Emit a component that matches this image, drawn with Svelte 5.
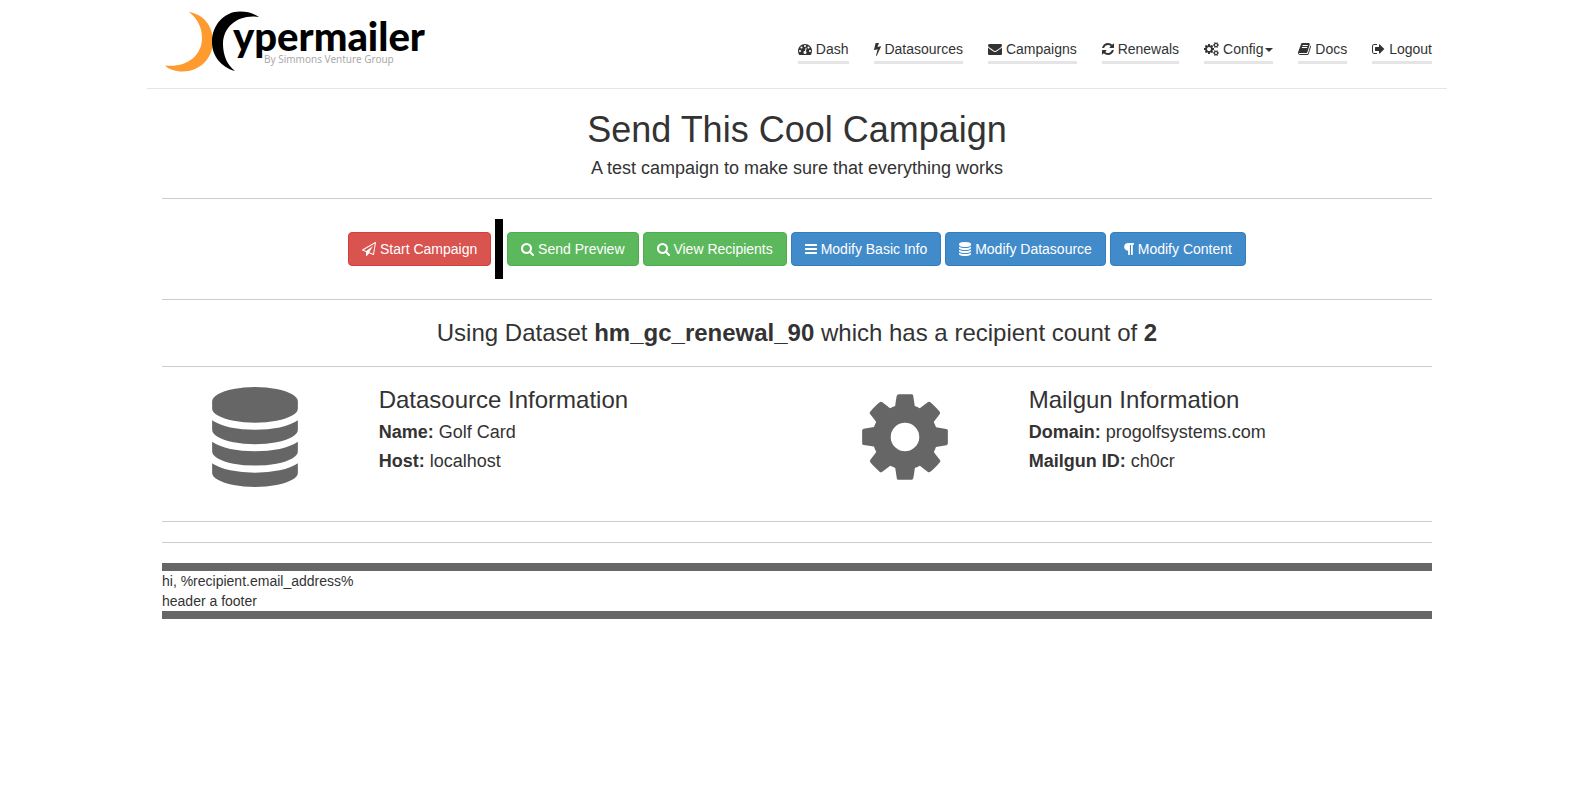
<script>
  const cog =
    'M1152 896q0-106-75-181t-181-75-181 75-75 181 75 181 181 75 181-75 75-181zm512-109v222q0 12-8 23t-20 13l-185 28q-19 54-39 91 35 50 107 138 10 12 10 25t-9 23q-27 37-99 108t-94 71q-12 0-26-9l-138-108q-44 23-91 38-16 136-29 186-7 28-36 28h-222q-14 0-24.5-8.5t-11.5-21.5l-28-184q-49-16-90-37l-141 107q-10 9-25 9-14 0-25-11-126-114-165-168-7-10-7-23 0-12 8-23 15-21 51-66.5t54-70.5q-27-50-41-99l-183-27q-13-2-21-12.5t-8-23.5v-222q0-12 8-23t19-13l186-28q14-46 39-92-40-57-107-138-10-12-10-24 0-10 9-23 26-36 98.5-107.5t94.5-71.5q13 0 26 10l138 107q44-23 91-38 16-136 29-186 7-28 36-28h222q14 0 24.5 8.5t11.5 21.5l28 184q49 16 90 37l142-107q9-9 24-9 13 0 25 10 129 119 165 170 7 8 7 22 0 12-8 23-15 21-51 66.5t-54 70.5q26 50 41 98l183 28q13 2 21 12.5t8 23.5z';
  const smallCog =
    'v140q0 16-149 31-12 27-30 52 51 113 51 138 0 4-4 7-122 71-124 71-8 0-46-47t-52-68q-20 2-30 2t-30-2q-14 21-52 68t-46 47q-2 0-124-71-4-3-4-7 0-25 51-138-18-25-30-52-149-15-149-31v-140q0-16 149-31 13-29 30-52-51-113-51-138 0-4 4-7 4-2 35-20t59-34 30-16q8 0 46 46.5t52 67.5q20-2 30-2t30 2q51-71 92-112l6-2q4 0 124 70 4 3 4 7 0 25-51 138 17 23 30 52 149 15 149 31z';
  const barShape = 'v128q0 26-19 45t-45 19h-1408q-26 0-45-19t-19-45v-128q0-26 19-45t45-19h1408q26 0 45 19t19 45z';

  // Each icon: left edge and width of its box in a 1792-unit em, then the outline.
  const icons = {
    dash: [0, 1792, 'M384 1152q0-53-37.5-90.5t-90.5-37.5-90.5 37.5-37.5 90.5 37.5 90.5 90.5 37.5 90.5-37.5 37.5-90.5zm192-448q0-53-37.5-90.5t-90.5-37.5-90.5 37.5-37.5 90.5 37.5 90.5 90.5 37.5 90.5-37.5 37.5-90.5zm428 481l101-382q6-26-7.5-48.5t-38.5-29.5-48 6.5-30 39.5l-101 382q-60 5-107 43.5t-63 98.5q-20 77 20 146t117 89 146-20 89-117q16-60-6-117t-72-91zm660-33q0-53-37.5-90.5t-90.5-37.5-90.5 37.5-37.5 90.5 37.5 90.5 90.5 37.5 90.5-37.5 37.5-90.5zm-640-640q0-53-37.5-90.5t-90.5-37.5-90.5 37.5-37.5 90.5 37.5 90.5 90.5 37.5 90.5-37.5 37.5-90.5zm448 192q0-53-37.5-90.5t-90.5-37.5-90.5 37.5-37.5 90.5 37.5 90.5 90.5 37.5 90.5-37.5 37.5-90.5zm320 448q0 261-141 483-19 29-54 29h-1402q-35 0-54-29-141-221-141-483 0-182 71-348t191-286 286-191 348-71 348 71 286 191 191 286 71 348z'],
    bolt: [448, 896, 'M1333 566q18 20 7 44l-540 1157q-13 25-42 25-4 0-14-2-17-5-25.5-19t-4.5-30l197-808-406 101q-4 1-12 1-18 0-31-11-18-15-13-39l201-825q4-14 16-23t28-9h328q19 0 32 12.5t13 29.5q0 8-5 18l-171 463 396-98q8-2 12-2 19 0 34 15z'],
    envelope: [0, 1792, 'M1792 710v794q0 66-47 113t-113 47h-1472q-66 0-113-47t-47-113v-794q44 49 101 87 362 246 497 345 57 42 92.5 65.5t94.5 48 110 24.5h2q51 0 110-24.5t94.5-48 92.5-65.5q170-123 498-345 57-39 100-87zm0-294q0 79-49 151t-122 123q-376 261-468 325-10 7-42.5 31t-54 38.5-52 32.5-57.5 27-50 9h-2q-23 0-50-9t-57.5-27-52-32.5-54-38.5-42.5-31q-91-64-262-182.5t-205-142.5q-62-42-117-115.5t-55-136.5q0-78 41.5-130t118.5-52h1472q65 0 112.5 47t47.5 113z'],
    refresh: [128, 1536, 'M1639 1056q0 5-1 7-64 268-268 434.5t-478 166.5q-146 0-282.5-55t-243.5-157l-129 129q-19 19-45 19t-45-19-19-45v-448q0-26 19-45t45-19h448q26 0 45 19t19 45-19 45l-137 137q71 66 161 102t187 36q134 0 250-65t186-179q11-17 53-117 8-23 30-23h192q13 0 22.5 9.5t9.5 22.5zm25-800v448q0 26-19 45t-45 19h-448q-26 0-45-19t-19-45 19-45l138-138q-148-137-349-137-134 0-250 65t-186 179q-11 17-53 117-8 23-30 23h-199q-13 0-22.5-9.5t-9.5-22.5v-7q65-268 270-434.5t480-166.5q146 0 284 55.5t245 156.5l130-129q19-19 45-19t45 19 19 45z'],
    cogs: [-64, 1920, 'M832 896q0-106-75-181t-181-75-181 75-75 181 75 181 181 75 181-75 75-181zm768 512q0-52-38-90t-90-38-90 38-38 90q0 53 37.5 90.5t90.5 37.5 90.5-37.5 37.5-90.5zm0-1024q0-52-38-90t-90-38-90 38-38 90q0 53 37.5 90.5t90.5 37.5 90.5-37.5 37.5-90.5zm-384 421v185q0 10-7 19.5t-16 10.5l-155 24q-11 35-32 76 34 48 90 115 7 11 7 20 0 12-7 19-23 30-82.5 89.5t-78.5 59.5q-11 0-21-7l-115-90q-37 19-77 31-11 108-23 155-7 24-30 24h-186q-11 0-20-7.5t-10-17.5l-23-153q-34-10-75-31l-118 89q-7 7-20 7-11 0-21-8-144-133-144-160 0-9 7-19 10-14 41-53t47-61q-23-44-35-82l-152-24q-10-1-17-9.5t-7-19.5v-185q0-10 7-19.5t16-10.5l155-24q11-35 32-76-34-48-90-115-7-11-7-20 0-12 7-20 22-30 82-89t79-59q11 0 21 7l115 90q34-18 77-32 11-108 23-154 7-24 30-24h186q11 0 20 7.5t10 17.5l23 153q34 10 75 31l118-89q8-7 20-7 11 0 21 8 144 133 144 160 0 8-7 19-12 16-42 54t-45 60q23 48 34 82l152 23q10 2 17 10.5t7 19.5zM1856 1338' + smallCog + 'M1856 314' + smallCog],
    book: [64, 1664, 'M1703 478q40 57 18 129l-275 906q-19 64-76.5 107.5t-122.5 43.5h-923q-77 0-148.5-53.5t-99.5-131.5q-24-67-2-127 0-4 3-27t4-37q1-8-3-21.5t-3-19.5q2-11 8-21t16.5-23.5 16.5-23.5q23-38 45-91.5t30-91.5q3-10 .5-30t-.5-28q3-11 17-28t17-23q21-36 42-92t25-90q1-9-2.5-32t.5-28q4-13 22-30.5t22-22.5q19-26 42.5-84.5t27.5-96.5q1-8-3-25.5t-2-26.5q2-8 9-18t18-23 17-21q8-12 16.5-30.5t15-35 16-36 19.5-32 26.5-23.5 36-11.5 47.5 5.5l-1 3q38-9 51-9h761q74 0 114 56t18 130l-274 906q-36 119-71.5 153.5t-128.5 34.5h-869q-27 0-38 15-11 16-1 43 24 70 144 70h923q29 0 56-15.5t35-41.5l300-987q7-22 5-57 38 15 59 43zm-1064 2q-4 13 2 22.5t20 9.5h608q13 0 25.5-9.5t16.5-22.5l21-64q4-13-2-22.5t-20-9.5h-608q-13 0-25.5 9.5t-16.5 22.5zm-83 256q-4 13 2 22.5t20 9.5h608q13 0 25.5-9.5t16.5-22.5l21-64q4-13-2-22.5t-20-9.5h-608q-13 0-25.5 9.5t-16.5 22.5z'],
    logout: [64, 1664, 'M704 1440q0 4 1 20t.5 26.5-3 23.5-10 19.5-20.5 6.5h-320q-119 0-203.5-84.5t-84.5-203.5v-704q0-119 84.5-203.5t203.5-84.5h320q13 0 22.5 9.5t9.5 22.5q0 4 1 20t.5 26.5-3 23.5-10 19.5-20.5 6.5h-320q-66 0-113 47t-47 113v704q0 66 47 113t113 47h312l11.5 1 11.5 3 8 5.5 7 9 2 13.5zm928-544q0 26-19 45l-544 544q-19 19-45 19t-45-19-19-45v-288h-448q-26 0-45-19t-19-45v-384q0-26 19-45t45-19h448v-288q0-26 19-45t45-19 45 19l544 544q19 19 19 45z'],
    plane: [0, 1792, 'M1764 11q33 24 27 64l-256 1536q-5 29-32 45-14 8-31 8-11 0-24-5l-527-215-298 327q-18 21-47 21-14 0-23-4-19-7-30-23.5t-11-36.5v-452l-472-193q-37-14-40-55-3-39 32-59l1664-960q35-21 68 2zm-342 1499l221-1323-1434 827 336 137 863-639-478 797z'],
    search: [64, 1664, 'M1216 832q0-185-131.5-316.5t-316.5-131.5-316.5 131.5-131.5 316.5 131.5 316.5 316.5 131.5 316.5-131.5 131.5-316.5zm512 832q0 52-38 90t-90 38q-54 0-90-38l-343-342q-179 124-399 124-143 0-273.5-55.5t-225-150-150-225-55.5-273.5 55.5-273.5 150-225 225-150 273.5-55.5 273.5 55.5 225 150 150 225 55.5 273.5q0 220-124 399l343 343q37 37 37 90z'],
    bars: [128, 1536, ['M1664 1344', 'M1664 832', 'M1664 320'].map((m) => m + barShape).join('')],
    database: [128, 1536, 'M896 768q237 0 443-43t325-127v170q0 69-103 128t-280 93.5-385 34.5-385-34.5-280-93.5-103-128v-170q119 84 325 127t443 43zm0 768q237 0 443-43t325-127v170q0 69-103 128t-280 93.5-385 34.5-385-34.5-280-93.5-103-128v-170q119 84 325 127t443 43zm0-384q237 0 443-43t325-127v170q0 69-103 128t-280 93.5-385 34.5-385-34.5-280-93.5-103-128v-170q119 84 325 127t443 43zm0-1152q208 0 385 34.5t280 93.5 103 128v128q0 69-103 128t-280 93.5-385 34.5-385-34.5-280-93.5-103-128v-128q0-69 103-128t280-93.5 385-34.5z'],
    paragraph: [256, 1280, 'M1534 189v73q0 29-18.5 61t-42.5 32q-50 0-54 1-26 6-32 31-3 11-3 64v1152q0 25-18 43t-43 18h-108q-25 0-43-18t-18-43v-1218h-143v1218q0 25-17.5 43t-43.5 18h-108q-26 0-43.5-18t-17.5-43v-496q-147-12-245-59-126-58-192-179-64-117-64-259 0-166 88-286 88-118 209-159 111-37 417-37h479q25 0 43 18t18 43z'],
    cog: [128, 1536, cog]
  };

  const nav = [
    { label: 'Dash', icon: 'dash' },
    { label: 'Datasources', icon: 'bolt' },
    { label: 'Campaigns', icon: 'envelope' },
    { label: 'Renewals', icon: 'refresh' },
    { label: 'Config', icon: 'cogs', menu: true },
    { label: 'Docs', icon: 'book' },
    { label: 'Logout', icon: 'logout' }
  ];

  const actions = [
    { label: 'Send Preview', icon: 'search', kind: 'success' },
    { label: 'View Recipients', icon: 'search', kind: 'success' },
    { label: 'Modify Basic Info', icon: 'bars', kind: 'primary' },
    { label: 'Modify Datasource', icon: 'database', kind: 'primary' },
    { label: 'Modify Content', icon: 'paragraph', kind: 'primary' }
  ];

  const panels = [
    { title: 'Datasource Information', icon: 'database', rows: [['Name:', 'Golf Card'], ['Host:', 'localhost']] },
    { title: 'Mailgun Information', icon: 'cog', rows: [['Domain:', 'progolfsystems.com'], ['Mailgun ID:', 'ch0cr']] }
  ];
</script>

{#snippet icon(name, size)}
  {@const [x, w, d] = icons[name]}
  <svg class="icon" viewBox="{x} 0 {w} 1792" width={Math.round((w * size) / 1792)} height={size} aria-hidden="true"><path {d} /></svg>
{/snippet}

<div class="container">
  <header>
    <a class="logo" href="#home" aria-label="Hypermailer home">
      <svg viewBox="0 0 270 70" width="270" height="70">
        <path fill="#ff9a2e" d="M27 6C41 8 51 20 51 35C51 53 37 65.500 21 65.500C13 65.500 6 63 3 59.500C23 62 40 51 40 32C40 22 36 13 27 6Z" />
        <path d="M97 11C91 7 85 5.500 78 5.500C62 5.500 50 19 50 36C50 50 59 61 73 65C65 59 61 49 61 38C61 20 77 8 97 11Z" />
        <text class="brand" x="71" y="45">ypermailer</text>
        <text class="tagline" x="102" y="57">By Simmons Venture Group</text>
      </svg>
    </a>
    <nav>
      {#each nav as item}
        {#if item.menu}
          <button class="nav-item" type="button" aria-haspopup="true">{@render icon(item.icon, 14)} {item.label}<span class="caret"></span></button>
        {:else}
          <a class="nav-item" href="#{item.icon}">{@render icon(item.icon, 14)} {item.label}</a>
        {/if}
      {/each}
    </nav>
  </header>

  <main>
    <h1>Send This Cool Campaign</h1>
    <p class="lead">A test campaign to make sure that everything works</p>
    <hr />
    <div class="actions">
      <button class="btn danger" type="button">{@render icon('plane', 14)} Start Campaign</button>
      <span class="divider"></span>
      {#each actions as a}
        <button class="btn {a.kind}" type="button">{@render icon(a.icon, 14)} {a.label}</button>
      {/each}
    </div>
    <hr />
    <h3 class="dataset">Using Dataset <b>hm_gc_renewal_90</b> which has a recipient count of <b>2</b></h3>
    <hr />
    <div class="panels">
      {#each panels as p}
        <section>
          <div class="figure">{@render icon(p.icon, 100)}</div>
          <div class="details">
            <h3>{p.title}</h3>
            {#each p.rows as [name, value]}
              <p><b>{name}</b> {value}</p>
            {/each}
          </div>
        </section>
      {/each}
    </div>
    <hr />
    <hr />
    <div class="message">
      <div>hi, %recipient.email_address%</div>
      <div>header a footer</div>
    </div>
  </main>
</div>

<style>
  :global(body) {
    margin: 0;
    padding-left: 7px;
    background: #fff;
    color: #333;
    font: 14px/20px 'Liberation Sans', Arial, sans-serif;
  }
  .container {
    max-width: 1300px;
    margin: 0 auto;
  }
  header {
    display: flex;
    flex-wrap: wrap;
    justify-content: space-between;
    align-items: flex-start;
    padding: 6px 15px 12px;
    border-bottom: 1px solid #e5e5e5;
  }
  .logo,
  .logo svg {
    display: block;
  }
  .brand {
    font: 900 40px Lato, sans-serif;
    fill: #000;
  }
  .tagline {
    font: 10px 'Noto Sans', sans-serif;
    fill: #aaa;
  }
  nav {
    display: flex;
    flex-wrap: wrap;
    gap: 25px;
    padding-top: 33px;
  }
  .nav-item {
    padding: 0 0 2px;
    border: 0;
    border-bottom: 3px solid #e5e5e5;
    background: none;
    color: #333;
    font: inherit;
    text-decoration: none;
    white-space: nowrap;
    cursor: pointer;
  }
  .icon {
    fill: currentColor;
    vertical-align: -2px;
  }
  .caret {
    display: inline-block;
    margin-left: 2px;
    vertical-align: middle;
    border: 4px solid transparent;
    border-top-color: #333;
    border-bottom: 0;
  }
  main {
    padding: 21px 15px;
  }
  h1,
  h3,
  p {
    margin: 0;
    font-weight: normal;
  }
  h1 {
    font-size: 36px;
    line-height: 39px;
    text-align: center;
  }
  h3 {
    font-size: 24px;
    line-height: 26px;
  }
  p {
    margin-top: 9px;
    font-size: 18px;
    line-height: 20px;
  }
  .lead,
  .dataset {
    text-align: center;
  }
  hr {
    height: 1px;
    margin: 20px 0;
    border: 0;
    background: #ccc;
  }
  .actions {
    display: flex;
    flex-wrap: wrap;
    justify-content: center;
    align-items: center;
    gap: 4px;
  }
  .divider {
    width: 8px;
    height: 60px;
    background: #000;
  }
  .btn {
    padding: 6px 13px;
    border: 1px solid;
    border-radius: 4px;
    color: #fff;
    font: inherit;
    white-space: nowrap;
    cursor: pointer;
  }
  .danger {
    background: #d9534f;
    border-color: #d43f3a;
  }
  .success {
    background: #5cb85c;
    border-color: #4cae4c;
  }
  .primary {
    background: #428bca;
    border-color: #357ebd;
  }
  .panels {
    display: grid;
    grid-template-columns: 1fr 1fr;
    margin: 0 -15px;
    padding-bottom: 14px;
  }
  section {
    display: grid;
    grid-template-columns: 1fr 2fr;
  }
  .figure {
    color: #666;
  }
  .figure .icon {
    display: block;
    margin: 0 auto;
  }
  .details {
    padding: 0 15px;
  }
  .message {
    border: solid #666;
    border-width: 8px 0;
  }
</style>
